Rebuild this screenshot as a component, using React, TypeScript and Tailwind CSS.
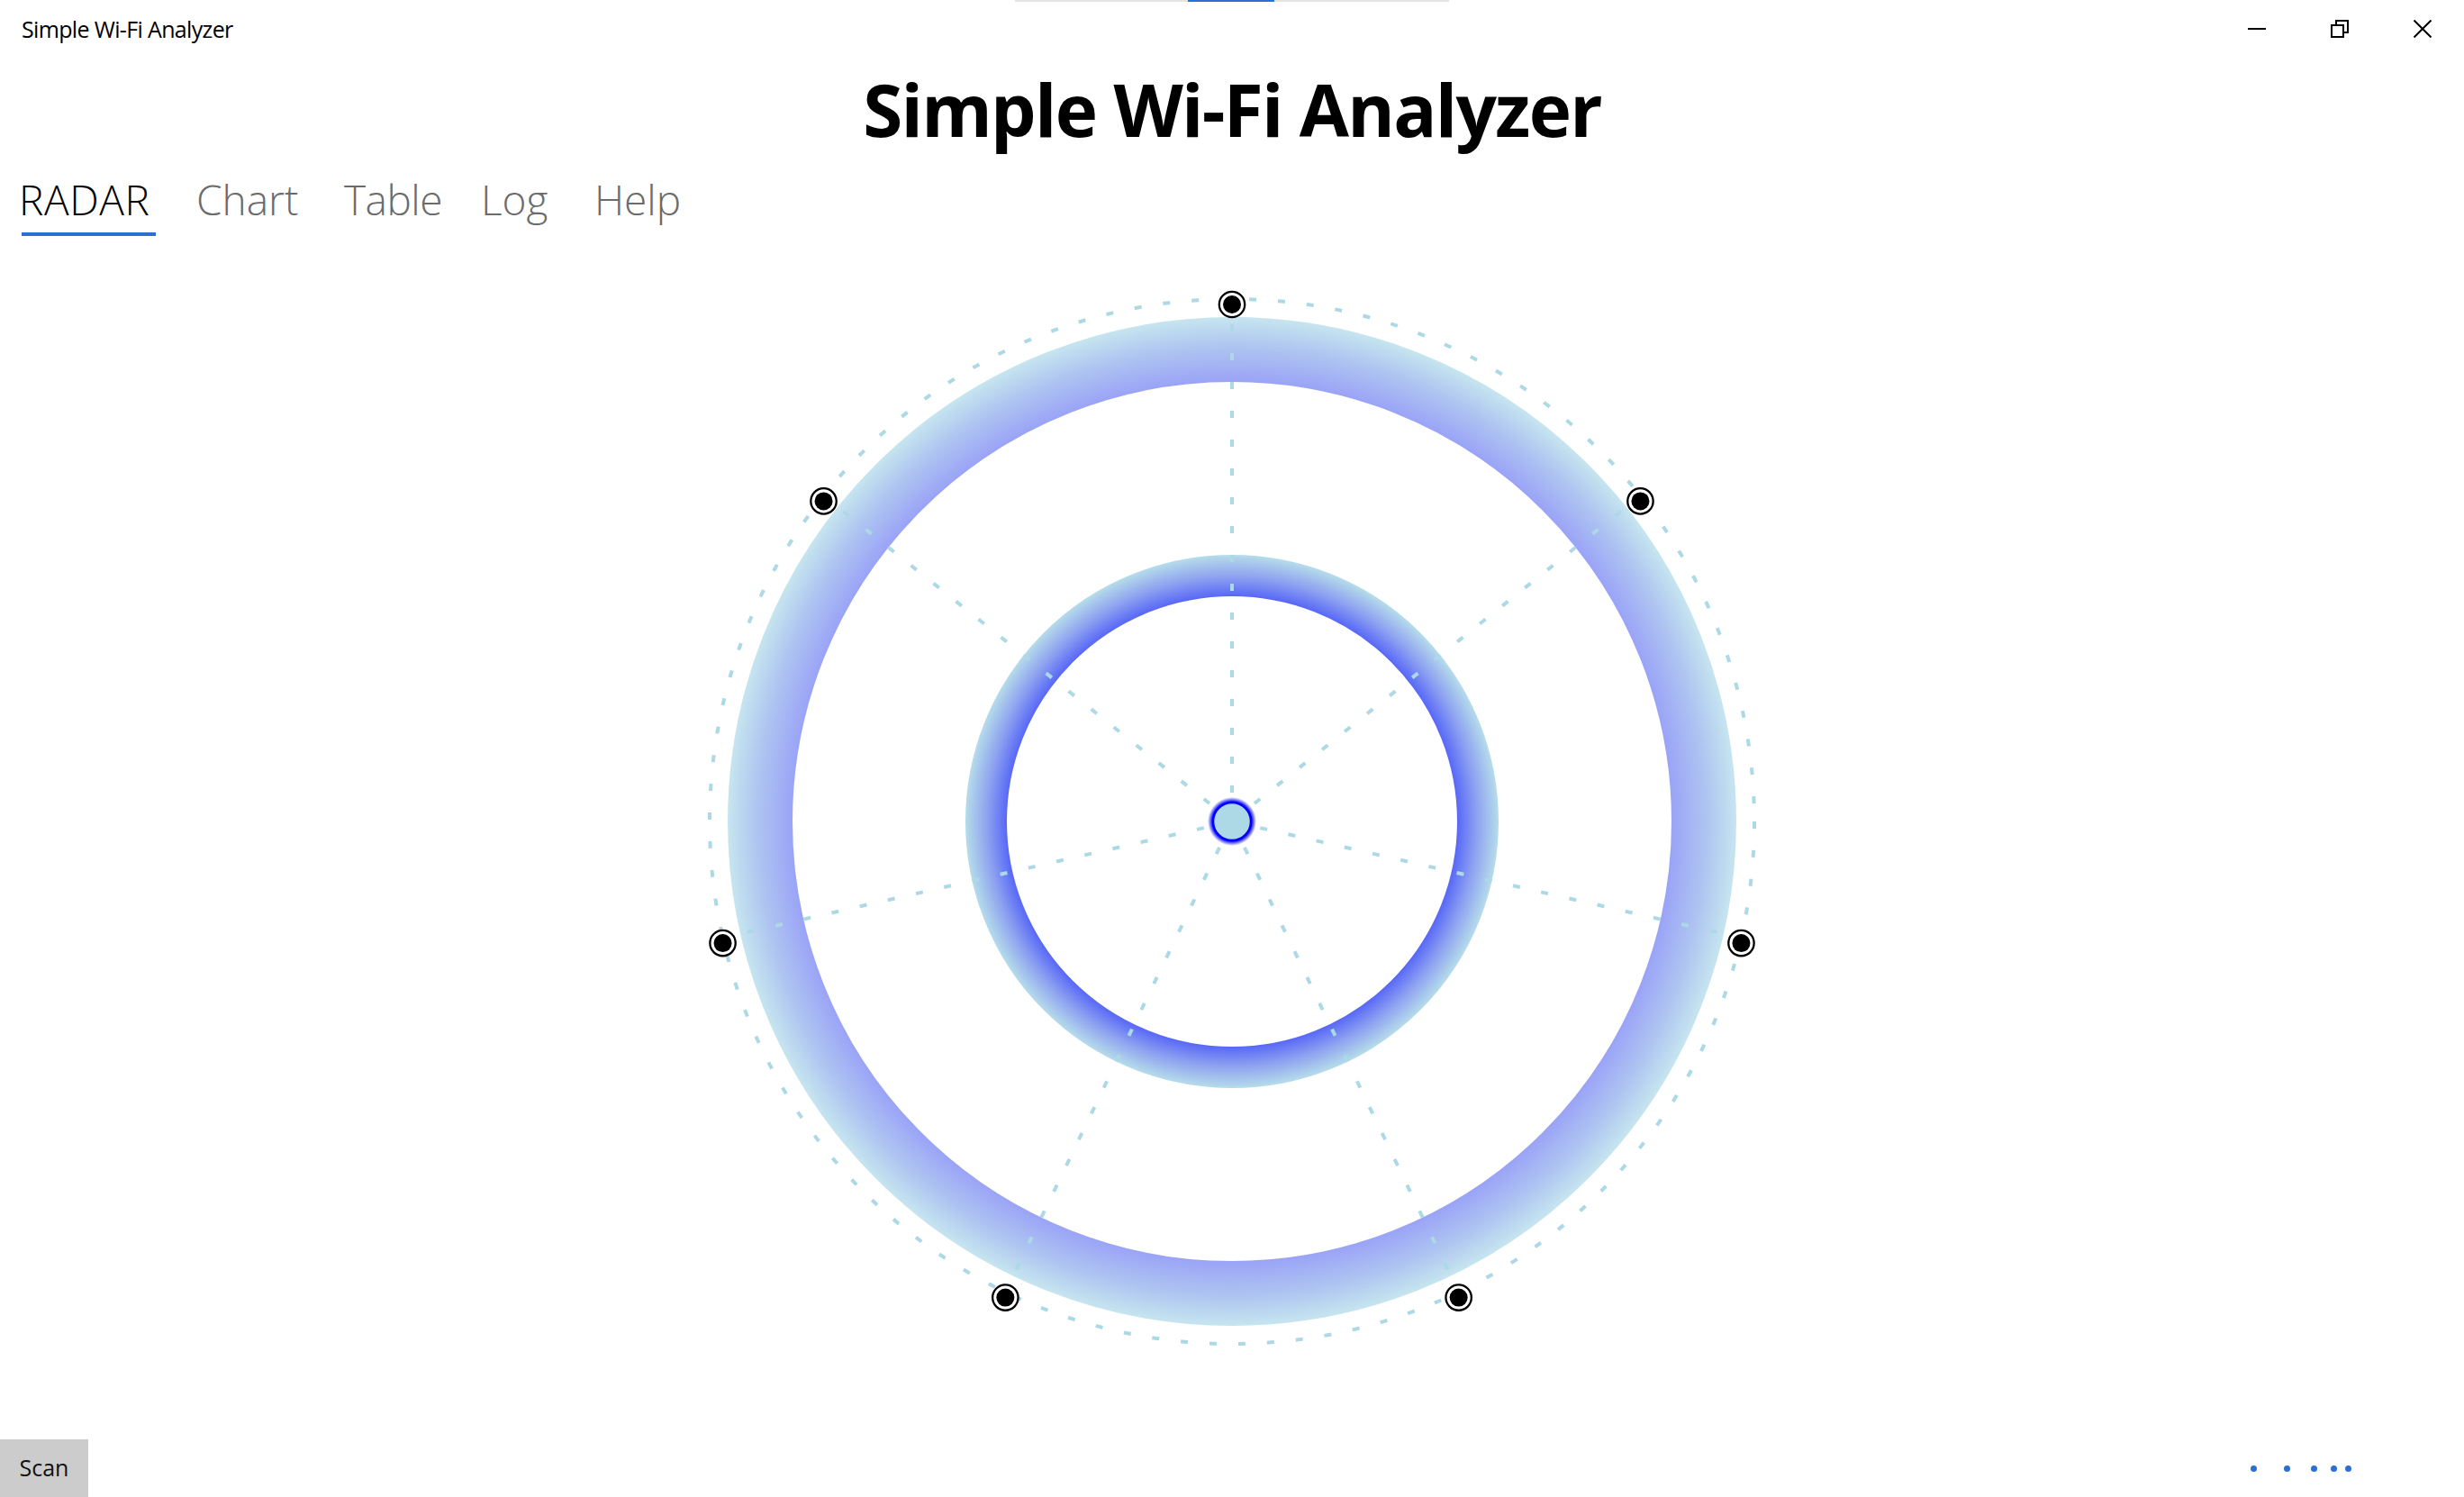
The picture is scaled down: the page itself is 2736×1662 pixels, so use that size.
import React from "react";

const CX = 1368;
const CY = 912;
const R = 580;

function Radar() {
  const ks = [0, 1, 2, 3, 4, 5, 6];
  const pts = ks.map((k) => {
    const a = (k * 2 * Math.PI) / 7;
    return { s: Math.sin(a), c: Math.cos(a) };
  });
  return (
    <svg
      width={2736}
      height={1336}
      viewBox="0 262 2736 1336"
      className="block"
    >
      <defs>
        <radialGradient id="gOuter" gradientUnits="userSpaceOnUse" cx={CX} cy={CY} r={560}>
          <stop offset="0" stopColor="#9aa3f7" />
          <stop offset="0.871" stopColor="#9aa3f7" />
          <stop offset="0.94" stopColor="#aec4f1" />
          <stop offset="1" stopColor="#c6e5ef" />
        </radialGradient>
        <radialGradient id="gInner" gradientUnits="userSpaceOnUse" cx={CX} cy={CY} r={296}>
          <stop offset="0" stopColor="#5868f7" />
          <stop offset="0.845" stopColor="#5868f7" />
          <stop offset="0.92" stopColor="#8ea3f0" />
          <stop offset="1" stopColor="#b6dcea" />
        </radialGradient>
        <radialGradient id="gDot" gradientUnits="userSpaceOnUse" cx={CX} cy={CY} r={27}>
          <stop offset="0" stopColor="#0000ff" />
          <stop offset="0.8" stopColor="#0000ff" />
          <stop offset="1" stopColor="#0000ff" stopOpacity="0" />
        </radialGradient>
      </defs>
      <circle cx={CX} cy={CY} r={524} fill="none" stroke="url(#gOuter)" strokeWidth={72} />
      <circle cx={CX} cy={CY} r={273} fill="none" stroke="url(#gInner)" strokeWidth={46} />
      {pts.map((p, i) => (
        <line
          key={i}
          x1={CX}
          y1={CY}
          x2={CX + R * p.s}
          y2={CY - R * p.c}
          stroke="#add8e6"
          strokeWidth={4}
          strokeDasharray="8 24"
        />
      ))}
      <circle cx={CX} cy={CY} r={R} fill="none" stroke="#add8e6" strokeWidth={4} strokeDasharray="8 24" />
      <circle cx={CX} cy={CY} r={27} fill="url(#gDot)" />
      <circle cx={CX} cy={CY} r={21} fill="#add8e6" stroke="#0000ff" strokeWidth={2.5} />
      {pts.map((p, i) => (
        <g key={i}>
          <circle cx={CX + R * p.s} cy={918 - R * p.c} r={14.2} fill="#ffffff" stroke="#000000" strokeWidth={2.3} />
          <circle cx={CX + R * p.s} cy={918 - R * p.c} r={10} fill="#000000" />
        </g>
      ))}
    </svg>
  );
}

export default function App() {
  const font = { fontFamily: "'Open Sans', 'Noto Sans', sans-serif" };
  return (
    <div className="w-[2736px] h-[1662px] bg-white flex flex-col overflow-hidden text-black" style={font}>
      {/* Title bar */}
      <div className="relative h-[64px] flex items-center shrink-0">
        <div className="absolute top-0 left-[1127px] w-[482px] h-[2px] bg-[#e3e3e3] flex">
          <div className="ml-[192px] w-[96px] h-[2px] bg-[#2b6fd0]" />
        </div>
        <div className="pl-[24px] text-[25px] tracking-[-0.65px] leading-none">Simple Wi-Fi Analyzer</div>
        <div className="ml-auto flex h-full">
          <div className="w-[92px] h-full flex items-center justify-center">
            <svg width="20" height="20" viewBox="0 0 20 20">
              <line x1="0" y1="10" x2="20" y2="10" stroke="#000" strokeWidth="2" />
            </svg>
          </div>
          <div className="w-[92px] h-full flex items-center justify-center">
            <svg width="20" height="20" viewBox="0 0 20 20">
              <rect x="1" y="6" width="13" height="13" fill="none" stroke="#000" strokeWidth="2" />
              <path d="M6 6 V1 H19 V14 H14" fill="none" stroke="#000" strokeWidth="2" />
            </svg>
          </div>
          <div className="w-[92px] h-full flex items-center justify-center">
            <svg width="20" height="20" viewBox="0 0 20 20">
              <path d="M0.5 0.5 L19.5 19.5 M19.5 0.5 L0.5 19.5" stroke="#000" strokeWidth="2" />
            </svg>
          </div>
        </div>
      </div>

      {/* Main title */}
      <div className="h-[120px] flex items-center justify-center shrink-0 pb-[7px]">
        <div className="text-[80px] font-bold tracking-[-1.7px] leading-none">Simple Wi-Fi Analyzer</div>
      </div>

      {/* Tabs */}
      <div className="h-[78px] shrink-0 flex flex-col">
        <div className="h-[74px] flex items-center pl-[21px] text-[46px] font-light leading-none">
          <div className="w-[197px] text-black tracking-[0.6px]">RADAR</div>
          <div className="w-[164px] text-[#6b6b6b]">Chart</div>
          <div className="w-[152px] text-[#6b6b6b] tracking-[-0.5px]">Table</div>
          <div className="w-[126px] text-[#6b6b6b]">Log</div>
          <div className="text-[#6b6b6b]">Help</div>
        </div>
        <div className="ml-[24px] w-[149px] h-[4px] bg-[#2b6fd0]" />
      </div>

      {/* Radar */}
      <div className="h-[1336px] shrink-0">
        <Radar />
      </div>

      {/* Bottom */}
      <div className="h-[64px] shrink-0 flex items-center">
        <div className="w-[98px] h-[64px] bg-[#cccccc] flex items-center justify-center text-[25px] text-[#111]">
          Scan
        </div>
        <div className="ml-auto mr-[125px] flex items-center">
          <div className="w-[7px] h-[7px] rounded-full bg-[#2b6fd0]" />
          <div className="ml-[30px] w-[7px] h-[7px] rounded-full bg-[#2b6fd0]" />
          <div className="ml-[23px] w-[7px] h-[7px] rounded-full bg-[#2b6fd0]" />
          <div className="ml-[15px] w-[7px] h-[7px] rounded-full bg-[#2b6fd0]" />
          <div className="ml-[9px] w-[7px] h-[7px] rounded-full bg-[#2b6fd0]" />
        </div>
      </div>
    </div>
  );
}
